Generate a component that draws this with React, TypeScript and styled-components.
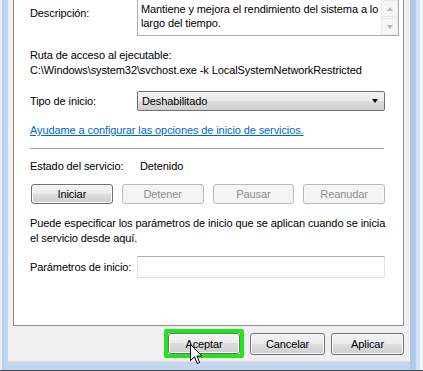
import React from "react";
import styled, { createGlobalStyle } from "styled-components";

const FONT = `"Liberation Sans", Arial, sans-serif`;

const Global = createGlobalStyle`
  html, body { margin: 0; padding: 0; width: 423px; height: 371px; overflow: hidden; background: #c2d7ef; }
  #root { width: 423px; height: 371px; }
  * { box-sizing: border-box; }
`;

const Frame = styled.div`
  position: relative;
  width: 423px;
  height: 371px;
  display: flex;
  flex-direction: column;
  padding: 0 13px 8px 8px;
  border-bottom: 1px solid #3c4752;
  background: linear-gradient(
    to right,
    #e8eff8 0px, #e8eff8 2px,
    #b3cdec 2px, #c3d8f0 8px,
    #c3d8f0 410px, #a8c6ea 410px,
    #b3cfef 416px, #d3e3f5 416px,
    #d3e3f5 420px, #f2f5f9 420px
  );
  font: 11px ${FONT};
  letter-spacing: -0.1px;
  color: #000;
`;

const Client = styled.div`
  flex: 1;
  display: flex;
  flex-direction: column;
  background: #f0f0f0;
  border-bottom: 1px solid #ead8dc;
`;

const Panel = styled.div`
  margin: 0 6px 0 5px;
  height: 326px;
  background: #fff;
  border: 1px solid #898c95;
  border-top: none;
  padding: 0 18px 0 16px;
  display: flex;
  flex-direction: column;
`;

const FieldRow = styled.div<{ $mt?: number; $col?: number }>`
  display: grid;
  grid-template-columns: ${(p) => p.$col ?? 107}px 1fr;
  align-items: center;
  margin-top: ${(p) => p.$mt ?? 0}px;
`;

const TopRow = styled(FieldRow)`
  align-items: start;
`;

const Text = styled.div<{ $mt?: number; $pt?: number }>`
  line-height: 15px;
  white-space: nowrap;
  margin-top: ${(p) => p.$mt ?? 0}px;
  padding-top: ${(p) => p.$pt ?? 0}px;
`;

const TextBox = styled.div`
  margin-top: -1px;
  height: 37px;
  border: 1px solid #abadb3;
  display: flex;
  background: #fff;
`;

const TextBoxContent = styled.div`
  flex: 1;
  padding: 2px 3px;
  line-height: 14px;
  white-space: nowrap;
  overflow: hidden;
`;

const ScrollBar = styled.div`
  width: 17px;
  display: flex;
  flex-direction: column;
  gap: 1px;
  background: #f4f4f4;
`;

const ScrollBtn = styled.div<{ $up?: boolean }>`
  flex: 1;
  display: flex;
  align-items: center;
  justify-content: center;
  background: #f6f6f6;
  border: 1px solid #eaeaea;
  &::after {
    content: "";
    width: 0;
    height: 0;
    border-left: 3.5px solid transparent;
    border-right: 3.5px solid transparent;
    ${(p) => (p.$up ? "border-bottom: 4px solid #b8b8b8;" : "border-top: 4px solid #b8b8b8;")}
  }
`;

const Select = styled.div`
  height: 20px;
  border: 1px solid #707070;
  border-radius: 2px;
  background: linear-gradient(to bottom, #f2f2f2 0%, #ebebeb 50%, #dddddd 50%, #cfcfcf 100%);
  display: flex;
  align-items: center;
  justify-content: space-between;
  padding: 0 6px 0 4px;
  &::after {
    content: "";
    width: 0;
    height: 0;
    border-left: 3.5px solid transparent;
    border-right: 3.5px solid transparent;
    border-top: 4px solid #000;
  }
`;

const Link = styled.a`
  display: block;
  margin-top: 12px;
  line-height: 15px;
  color: #0066cc;
  text-decoration: underline;
  white-space: nowrap;
`;

const Separator = styled.div`
  margin-top: 10px;
  height: 1px;
  margin-right: 1px;
  background: #a0a0a0;
`;

const ButtonGrid = styled.div`
  margin-top: 10px;
  margin-left: 1px;
  display: grid;
  grid-template-columns: repeat(4, 1fr);
  gap: 9px;
`;

const WinButton = styled.div<{ $disabled?: boolean; $w?: number; $h?: number }>`
  width: ${(p) => (p.$w ? `${p.$w}px` : "auto")};
  height: ${(p) => p.$h ?? 20}px;
  display: flex;
  align-items: center;
  justify-content: center;
  border-radius: 3px;
  border: 1px solid ${(p) => (p.$disabled ? "#b5b8bb" : "#707070")};
  background: ${(p) =>
    p.$disabled
      ? "#f4f4f4"
      : "linear-gradient(to bottom, #f2f2f2 0%, #ebebeb 50%, #dddddd 50%, #cfcfcf 100%)"};
  color: ${(p) => (p.$disabled ? "#8d8d8d" : "#000")};
  box-shadow: inset 0 0 0 1px ${(p) => (p.$disabled ? "#f8f8f8" : "#fcfcfc")};
`;

const Input = styled.div`
  height: 22px;
  border: 1px solid #e2e3ea;
  border-top-color: #abadb3;
  background: #fff;
`;

const BottomBar = styled.div`
  flex: 1;
  display: flex;
  justify-content: flex-end;
  align-items: center;
  gap: 6px;
  padding-right: 6px;
`;

const Highlight = styled.div`
  border: 4px solid #22e51f;
  border-radius: 2px;
`;

const Cursor = styled.svg`
  position: absolute;
  left: 190px;
  top: 344px;
  pointer-events: none;
`;

export default function App() {
  return (
    <>
      <Global />
      <Frame>
        <Client>
          <Panel>
            <TopRow>
              <Text $pt={6}>Descripción:</Text>
              <TextBox>
                <TextBoxContent>
                  Mantiene y mejora el rendimiento del sistema a lo
                  <br />
                  largo del tiempo.
                </TextBoxContent>
                <ScrollBar>
                  <ScrollBtn $up />
                  <ScrollBtn />
                </ScrollBar>
              </TextBox>
            </TopRow>
            <Text $mt={12}>Ruta de acceso al ejecutable:</Text>
            <Text>C:\Windows\system32\svchost.exe -k LocalSystemNetworkRestricted</Text>
            <FieldRow $mt={13}>
              <Text>Tipo de inicio:</Text>
              <Select>Deshabilitado</Select>
            </FieldRow>
            <Link>Ayudame a configurar las opciones de inicio de servicios.</Link>
            <Separator />
            <FieldRow $mt={10} $col={110}>
              <Text>Estado del servicio:</Text>
              <Text>Detenido</Text>
            </FieldRow>
            <ButtonGrid>
              <WinButton>Iniciar</WinButton>
              <WinButton $disabled>Detener</WinButton>
              <WinButton $disabled>Pausar</WinButton>
              <WinButton $disabled>Reanudar</WinButton>
            </ButtonGrid>
            <Text $mt={12}>
              Puede especificar los parámetros de inicio que se aplican cuando se inicia
              <br />
              el servicio desde aquí.
            </Text>
            <FieldRow $mt={10}>
              <Text>Parámetros de inicio:</Text>
              <Input />
            </FieldRow>
          </Panel>
          <BottomBar>
            <Highlight>
              <WinButton $w={72} $h={21}>Aceptar</WinButton>
            </Highlight>
            <WinButton $w={75} $h={22}>Cancelar</WinButton>
            <WinButton $w={73} $h={22}>Aplicar</WinButton>
          </BottomBar>
        </Client>
        <Cursor width="13" height="21" viewBox="0 0 13 21">
          <path
            d="M0.5 0.5 L0.5 16.5 L4.5 12.8 L7.2 19.5 L9.6 18.5 L7 12 L12 12 Z"
            fill="#fff"
            stroke="#000"
            strokeWidth="1"
            strokeLinejoin="miter"
          />
        </Cursor>
      </Frame>
    </>
  );
}
